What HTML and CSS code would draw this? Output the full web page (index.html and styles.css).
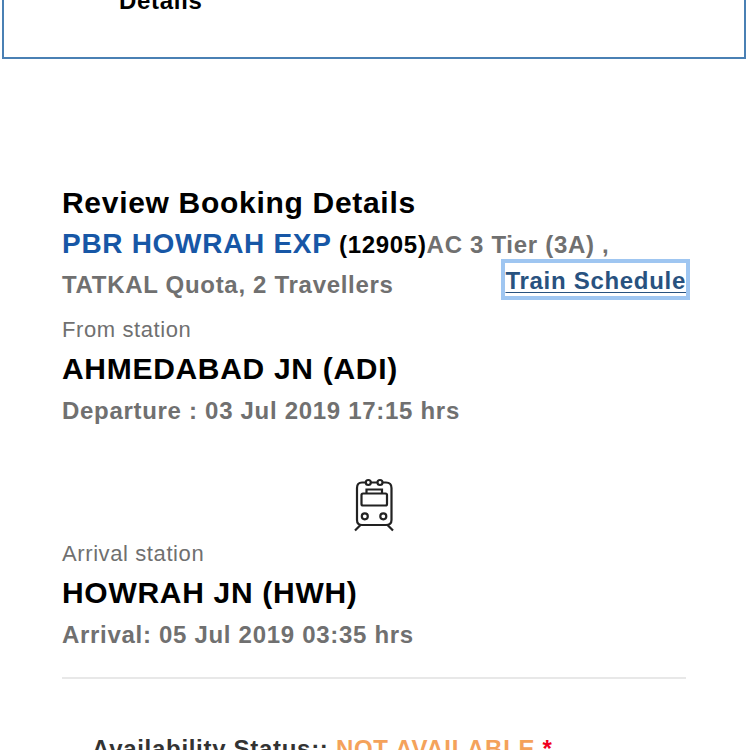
FILE: index.html
```html
<!DOCTYPE html>
<html lang="en">
<head>
  <meta charset="UTF-8">
  <meta name="viewport" content="width=device-width, initial-scale=1.0">
  <title>Review Booking</title>
  <link rel="stylesheet" href="styles.css">
</head>
<body>
  <!-- Booking steps -->
  <div class="steps">
    <div class="step-name">Details</div>
  </div>

  <!-- Journey -->
  <div class="review">
    <h2 class="review-title">Review Booking Details</h2>
    <div class="train-line">
      <span class="train-name">PBR HOWRAH EXP</span>
      <span class="train-number">(12905)</span><span class="train-class">AC 3 Tier (3A) ,</span>
    </div>
    <div class="quota-line">
      <span class="quota">TATKAL Quota, 2 Travellers</span>
      <a href="#" class="schedule-link">Train Schedule</a>
    </div>

    <div class="station">
      <div class="station-label">From station</div>
      <div class="station-name">AHMEDABAD JN (ADI)</div>
      <div class="station-time">Departure : 03 Jul 2019 17:15 hrs</div>
    </div>

    <div class="train-icon">
      <svg width="42" height="56" viewBox="353 476 42 56" fill="none" stroke="#222" stroke-width="2.200">
        <path d="M366 482.500H362Q357 482.500 357 488V520Q357 525 362 525H386Q391.500 525 391.500 520V488Q391.500 482.500 386 482.500H382.500M370.500 482.500H377.500"/>
        <circle cx="368.300" cy="482.500" r="2.500"/>
        <circle cx="380" cy="482.500" r="2.500"/>
        <path d="M366.500 493V489.500H382V493"/>
        <rect x="361.500" y="493.500" width="25.500" height="12" rx="1.500"/>
        <circle cx="364.800" cy="516.300" r="3"/>
        <circle cx="383.300" cy="516.300" r="3"/>
        <path d="M360.500 525L355 530.500M387.500 525L393 530.500"/>
      </svg>
    </div>

    <div class="station arrival">
      <div class="station-label">Arrival station</div>
      <div class="station-name">HOWRAH JN (HWH)</div>
      <div class="station-time">Arrival: 05 Jul 2019 03:35 hrs</div>
    </div>
  </div>

  <!-- Availability -->
  <div class="availability">
    <span class="status-label">Availability Status::</span>
    <span class="status-value">NOT AVAILABLE</span>
    <span class="required">*</span>
  </div>
</body>
</html>
```
FILE: styles.css
```css
body {
  margin: 0;
  height: 750px;
  overflow: hidden;
  background-color: #fff;
  font-family: "Liberation Sans", Arial, sans-serif;
  font-size: 24px;
  font-weight: bold;
  letter-spacing: 0.7px;
  white-space: nowrap;
}

.steps {
  display: flex;
  align-items: flex-start;
  box-sizing: border-box;
  height: 59px;
  margin: 0 4px 0 2px;
  padding-left: 115px;
  border: 2px solid #4a80b4;
  border-top: none;
}

.step-name {
  margin-top: -19px;
  line-height: 40px;
}

.review {
  margin: 126px 64px 0 62px;
  border-bottom: 2px solid #e8e8e8;
}

.review-title {
  height: 39px;
  margin: 0;
  font-size: 30px;
  line-height: 35px;
}

.train-line {
  height: 40px;
  line-height: 40px;
}

.train-name {
  color: #1757a6;
  font-size: 28px;
}

.train-class,
.quota,
.station-time {
  color: #707070;
}

.quota-line {
  display: flex;
  justify-content: space-between;
  height: 51px;
  line-height: 42px;
}

.schedule-link {
  height: 33px;
  margin-top: -1px;
  line-height: 36px;
  color: #28527f;
  outline: 4px solid #9fc6f1;
  text-underline-offset: 3px;
  text-decoration-thickness: 1px;
}

.station-label {
  color: #707070;
  font-size: 22px;
  font-weight: normal;
  letter-spacing: 0.6px;
  line-height: 30px;
}

.station-name {
  font-size: 30px;
  line-height: 48px;
}

.station-time {
  line-height: 36px;
}

.train-icon {
  display: flex;
  justify-content: center;
  height: 63px;
  padding-top: 47px;
}

.arrival {
  padding-bottom: 24px;
}

.availability {
  padding: 50px 0 0 92px;
  line-height: 40px;
}

.status-label {
  color: #333;
}

.status-value {
  color: #f4a25b;
}

.required {
  color: #f00020;
}
```
